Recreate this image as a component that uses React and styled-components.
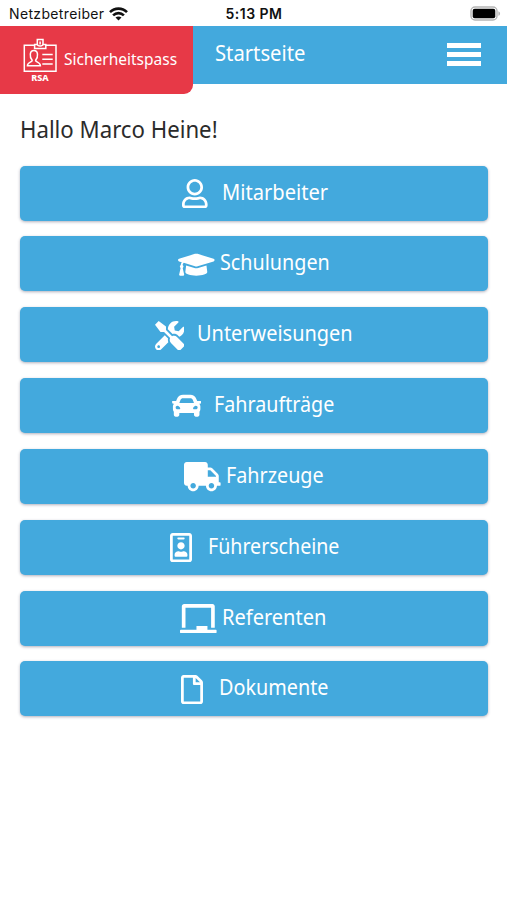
import React from 'react'
import styled, { createGlobalStyle } from 'styled-components'
import {
  FaRegUser, FaGraduationCap, FaTools, FaCar, FaTruck, FaRegIdBadge, FaChalkboard, FaRegFile
} from 'react-icons/fa'

const GlobalStyle = createGlobalStyle`
  * {
    box-sizing: border-box;
  }
  body {
    margin: 0;
    background: #fff;
    font-family: 'Noto Sans', 'Open Sans', sans-serif;
  }
`

const Screen = styled.div`
  width: 507px;
  height: 900px;
  overflow: hidden;
`
const StatusBar = styled.div`
  display: grid;
  grid-template-columns: 1fr auto 1fr;
  align-items: center;
  height: 25.5px;
  padding: 2px 6px 0 9px;
  font-family: Inter, sans-serif;
  font-size: 14px;
  color: #111;
`
const Carrier = styled.div`
  display: flex;
  align-items: center;
  gap: 5px;
  letter-spacing: 0.35px;
`
const Clock = styled.div`
  margin-right: 2px;
  font-size: 14px;
  font-weight: 600;
  letter-spacing: 0.5px;
`
const BatteryIcon = styled.svg`
  justify-self: end;
`

const Header = styled.header`
  display: flex;
  align-items: flex-start;
  height: 68.5px;
  background: linear-gradient(#43a9dd 58px, #fff 58px);
`
const Brand = styled.div`
  display: flex;
  width: 193px;
  height: 68.5px;
  padding: 12px 0 0 22px;
  background: #e73947;
  border-radius: 0 0 9px 0;
  color: #fff;
`
const Title = styled.div`
  flex: 1;
  padding-left: 22px;
  line-height: 53px;
  color: #fff;
`
const MenuButton = styled.button`
  display: flex;
  flex-direction: column;
  gap: 4.7px;
  margin: 17.5px 26px 0 0;
  padding: 0;
  border: 0;
  background: none;
`
const MenuBar = styled.span`
  width: 34px;
  height: 4.5px;
  background: #fff;
`

const Narrow = styled.span`
  display: block;
  flex: none;
  width: ${(p) => p.$width}px;
  font-size: ${(p) => p.$size}px;
  white-space: nowrap;
  transform: scaleX(${(p) => p.$scale});
  transform-origin: 0 50%;
`
const BrandName = styled(Narrow)`
  line-height: 41px;
`

const Content = styled.main`
  padding: 0 19px 0 20px;
`
const Greeting = styled.h1`
  margin: 0;
  height: 71.5px;
  line-height: 71px;
  font-weight: 400;
  color: #2b2b2b;
`
const Menu = styled.nav`
  display: flex;
  flex-direction: column;
  gap: 15.85px;
`
const MenuItem = styled.button`
  display: flex;
  justify-content: center;
  align-items: center;
  height: 55px;
  padding: 1px 0 0;
  border: 0;
  border-radius: 5px;
  background: #43a9dd;
  box-shadow: 0 1px 3px rgba(60, 60, 90, 0.4);
  color: #fff;
  font-family: inherit;
  text-align: left;

  svg {
    flex: none;
    width: ${(p) => p.$iconWidth}px;
    height: 29.3px;
    margin-right: ${(p) => p.$gap}px;
  }
`
const MenuLabel = styled(Narrow)`
  margin-top: -5px;
`

const items = [
  { label: 'Mitarbeiter', icon: FaRegUser, iconWidth: 25.6, gap: 14, width: 104, scale: 0.945 },
  { label: 'Schulungen', icon: FaGraduationCap, iconWidth: 36.6, gap: 5.5, width: 110, scale: 0.928 },
  { label: 'Unterweisungen', icon: FaTools, iconWidth: 29.3, gap: 12.5, width: 156, scale: 0.936 },
  { label: 'Fahraufträge', icon: FaCar, iconWidth: 29.3, gap: 12.5, width: 122, scale: 0.925 },
  { label: 'Fahrzeuge', icon: FaTruck, iconWidth: 36.6, gap: 5, width: 98, scale: 0.928 },
  { label: 'Führerscheine', icon: FaRegIdBadge, iconWidth: 22, gap: 16.5, width: 130, scale: 0.92 },
  { label: 'Referenten', icon: FaChalkboard, iconWidth: 36.6, gap: 5.5, width: 106, scale: 0.94 },
  { label: 'Dokumente', icon: FaRegFile, iconWidth: 22, gap: 16, width: 107.5, scale: 0.93 }
]

function WifiIcon () {
  return (
    <svg width='19' height='14' viewBox='0 0 19 14' fill='none' stroke='#111' strokeWidth='2.6'>
      <path d='M1 5.2C5.8 .4 13.2 .4 18 5.2' />
      <path d='M4.1 8.4C7.2 5.4 11.8 5.4 14.9 8.4' />
      <path d='M9.5 13.6 6.5 10.5C8.2 9 10.8 9 12.5 10.5Z' fill='#111' stroke='none' />
    </svg>
  )
}

function Battery () {
  return (
    <BatteryIcon width='31' height='15' viewBox='0 0 31 15'>
      <rect x='1' y='1' width='26' height='13' rx='4' fill='#fff' stroke='#b5b5b5' strokeWidth='1.4' />
      <rect x='2.7' y='2.8' width='22.6' height='9.4' rx='2' fill='#000' />
      <path d='M28.4 5.2C30.6 6 30.6 9 28.4 9.8Z' fill='#b5b5b5' />
    </BatteryIcon>
  )
}

const Badge = styled.div`
  display: flex;
  flex-direction: column;
  align-items: center;
  width: 36px;
  margin-right: 6px;
  font-size: 9px;
  font-weight: 800;
  line-height: 10px;
`

function Logo () {
  return (
    <Badge>
      <svg width='36' height='35' viewBox='0 0 36 35' fill='none' stroke='#fff' strokeWidth='1.5'>
        <path d='M13 7.2H2.3V33.2H34V7.2H23.5' />
        <path d='M15.3 6.4V1.6H21V6.4' />
        <path d='M12.6 6.4H15.3C15.6 8.4 20.7 8.4 21 6.4H23.8V10.4H12.6Z' />
        <path d='M18.1 3.6V6.4' />
        <path d='M10.2 22.2C7.2 18.6 7.6 12.6 11.9 12.6S16.6 18.6 13.6 22.2C13.5 24.5 18.4 23.8 18.4 27.8H5.4C5.4 23.8 10.3 24.5 10.2 22.2Z' />
        <path d='M20.3 16.4H30.7M20.3 21.2H30.7M20.3 26H30.7' />
      </svg>
      RSA
    </Badge>
  )
}

export default function App () {
  return (
    <Screen>
      <GlobalStyle />
      <StatusBar>
        <Carrier>Netzbetreiber <WifiIcon /></Carrier>
        <Clock>5:13 PM</Clock>
        <Battery />
      </StatusBar>
      <Header>
        <Brand>
          <Logo />
          <BrandName $size={17} $width={113} $scale={0.912}>Sicherheitspass</BrandName>
        </Brand>
        <Title><Narrow $size={21.3} $width={91} $scale={0.95}>Startseite</Narrow></Title>
        <MenuButton aria-label='Menü'>
          <MenuBar />
          <MenuBar />
          <MenuBar />
        </MenuButton>
      </Header>
      <Content>
        <Greeting><Narrow $size={23} $width={198} $scale={0.965}>Hallo Marco Heine!</Narrow></Greeting>
        <Menu>
          {items.map(({ label, icon: Icon, iconWidth, gap, width, scale }) => (
            <MenuItem key={label} $iconWidth={iconWidth} $gap={gap}>
              <Icon />
              <MenuLabel $size={21.3} $width={width} $scale={scale}>{label}</MenuLabel>
            </MenuItem>
          ))}
        </Menu>
      </Content>
    </Screen>
  )
}
